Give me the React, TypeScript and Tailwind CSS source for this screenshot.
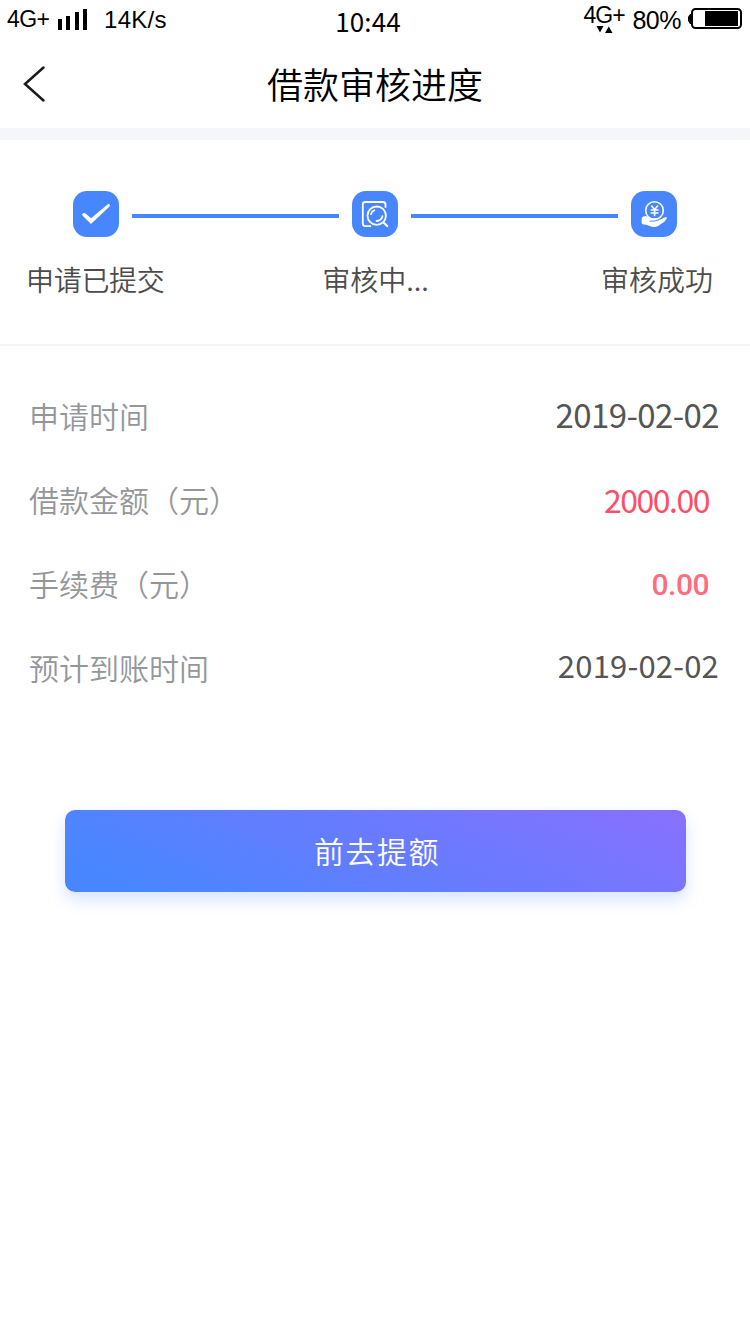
import React from "react";

function SignalBars() {
  return (
    <div className="ml-2 mt-[9px] flex h-[21px] w-[29px] items-end justify-between">
      <span className="h-[11px] w-1 bg-black" />
      <span className="h-[14px] w-1 bg-black" />
      <span className="h-[18px] w-1 bg-black" />
      <span className="h-[21px] w-1 bg-black" />
    </div>
  );
}

function Battery() {
  return (
    <svg className="ml-[6px] mt-[7px] h-[23px] w-[55px]" viewBox="0 0 55 23">
      <path d="M4.500 7H3L1 10v4l2 3h1.500z" fill="#000" />
      <rect x="5" y="2" width="49" height="19" rx="3.500" fill="none" stroke="#000" strokeWidth="2" />
      <rect x="18" y="4" width="33" height="15" fill="#000" />
    </svg>
  );
}

function StatusBar() {
  return (
    <div className="flex h-10 items-start justify-between font-['Liberation_Sans',sans-serif] text-black">
      <div className="flex w-[243px] items-start pl-[7px]">
        <span className="mt-[7px] w-[43px] text-[23px] leading-6 tracking-[-0.6px]">4G+</span>
        <SignalBars />
        <span className="ml-[17px] mt-[8px] text-[24px] leading-6 tracking-[0.3px]">14K/s</span>
      </div>
      <span className="mt-[7px] font-['Noto_Sans_CJK_SC',sans-serif] text-[26px] leading-7 tracking-[0.1px]">10:44</span>
      <div className="flex w-[257px] items-start justify-end pr-[8px]">
        <div className="flex w-[43px] flex-col">
          <span className="mt-[4px] text-[23px] leading-[22px] tracking-[-0.9px]">4G+</span>
          <svg className="ml-[13px] h-[7px] w-[17px]" viewBox="0 0 17 7">
            <path d="M0.500 0h7l-3.500 6.500zM9 7h7.500L12.800 0.500z" fill="#000" />
          </svg>
        </div>
        <span className="ml-[6px] mt-[8px] text-[25px] leading-6 tracking-[-0.5px]">80%</span>
        <Battery />
      </div>
    </div>
  );
}

function CheckIcon() {
  return (
    <svg className="size-[46px]" viewBox="0 0 46 46">
      <path d="M9.200 24.200q-.6-1.300 1.300-2.200.8-.3 1.700.3l5.900 5L34.800 13.300q1.700-.8 2.200.6.200.7-.5 1.500L18 33z" fill="#fff" />
    </svg>
  );
}

function ReviewIcon() {
  return (
    <svg className="size-[46px]" viewBox="0 0 46 46" fill="none" stroke="#fff" strokeWidth="1.800" strokeLinecap="round">
      <path d="M33.500 16v-2.500q0-2.500-2.500-2.500H13.300q-2.500 0-2.500 2.500v19q0 2.600 2.600 2.600h5" />
      <circle cx="24.700" cy="24.700" r="9.200" />
      <path d="M31.500 31.500l3.700 3.500" strokeWidth="2.200" />
      <path d="M19 23.200q.8-2.700 3.300-3.900M24.500 30q4.800-.4 6-4.800" />
    </svg>
  );
}

function PayoutIcon() {
  return (
    <svg className="size-[46px]" viewBox="0 0 46 46" fill="none" stroke="#fff" strokeLinecap="round">
      <circle cx="23.500" cy="19.500" r="8.800" strokeWidth="1.600" />
      <path d="M20.700 15l2.900 3.500 2.900-3.500M20.200 19H27M20.200 22H27M23.600 19v5.500" strokeWidth="1.600" />
      <path
        d="M10.700 27q1-2 3.800-2 2.500.2 4.500 2.200 2.700.6 6 .1 2.300.2 2.200 1.700 2.300-.3 4.300-1.600 2.300-1.500 3.700-1.500 1.300.4.400 1.800-1.800 3.200-5.300 5-3 2.700-6.300 3.200-2.500.3-6-1.200-3-1-6.300-1.400-1.500-.6-1-3z"
        fill="#fff"
        stroke="none"
      />
      <path d="M19 30.200q5 .3 8.500-1.200" stroke="#4886ff" strokeWidth="1" />
    </svg>
  );
}

function Tile({ children }: { children: React.ReactNode }) {
  return <div className="size-[46px] shrink-0 rounded-[14px] bg-[#4886ff]">{children}</div>;
}

function Progress() {
  return (
    <section className="h-[206px] border-b-2 border-[#f5f5f7] pt-[51px]">
      <div className="flex items-center px-[73px]">
        <Tile><CheckIcon /></Tile>
        <span className="mx-[13px] mt-[3px] h-1 flex-1 bg-[#4886ff]" />
        <Tile><ReviewIcon /></Tile>
        <span className="mx-[13px] mt-[3px] h-1 flex-1 bg-[#4886ff]" />
        <Tile><PayoutIcon /></Tile>
      </div>
      <div className="mt-[22px] grid grid-cols-3 text-[28px] font-[350] leading-10 text-[#4c4c4c]">
        <span className="pl-[26px] tracking-[-0.3px]">申请已提交</span>
        <span className="pl-px text-center">审核中...</span>
        <span className="pr-[37px] text-right">审核成功</span>
      </div>
    </section>
  );
}

function Row({ label, value, className }: { label: string; value: string; className: string }) {
  return (
    <div className="flex h-[84px] items-center justify-between pl-[29px]">
      <span className="text-[30px] font-[350] leading-10 text-[#94979a]">{label}</span>
      <span className={className}>{value}</span>
    </div>
  );
}

export default function App() {
  return (
    <main className="h-[1334px] w-[750px] overflow-hidden bg-white font-['Noto_Sans_CJK_SC',sans-serif]">
      <StatusBar />
      <header className="flex h-[88px] items-center">
        <svg className="ml-[23px] h-[38px] w-[23px]" viewBox="0 0 23 38">
          <path d="M20.500 2.500L2 19l18.500 16.500" fill="none" stroke="#1a1a1a" strokeWidth="2.500" strokeLinecap="round" />
        </svg>
        <h1 className="mb-[2px] mr-[46px] flex-1 text-center text-[36px] font-[350] leading-[52px] text-black">借款审核进度</h1>
      </header>
      <div className="h-3 bg-[#f5f6fa]" />
      <Progress />
      <section className="pt-[27px]">
        <Row label="申请时间" value="2019-02-02" className="mb-[2px] pr-[31px] text-[33px] leading-10 tracking-[-0.6px] text-[#555]" />
        <Row label="借款金额（元）" value="2000.00" className="mb-px pr-[41px] text-[32px] leading-10 tracking-[-1.5px] text-[#fb4f68]" />
        <Row label="手续费（元）" value="0.00" className="mt-[3px] pr-[41px] font-['Roboto',sans-serif] text-[30px] font-medium leading-10 tracking-[-0.5px] text-[#ff6b80]" />
        <Row label="预计到账时间" value="2019-02-02" className="mb-[5px] pr-[31px] text-[31px] leading-10 tracking-[0.2px] text-[#555]" />
      </section>
      <button className="ml-[65px] mt-[101px] flex h-[82px] w-[621px] items-center justify-center rounded-[10px] bg-[linear-gradient(25deg,#4886ff_10%,#8a70ff_100%)] pb-[2px] pl-[3px] text-[30px] font-[350] leading-10 tracking-[1.5px] text-white shadow-[0_8px_16px_rgba(72,134,255,0.22)]">
        前去提额
      </button>
    </main>
  );
}
